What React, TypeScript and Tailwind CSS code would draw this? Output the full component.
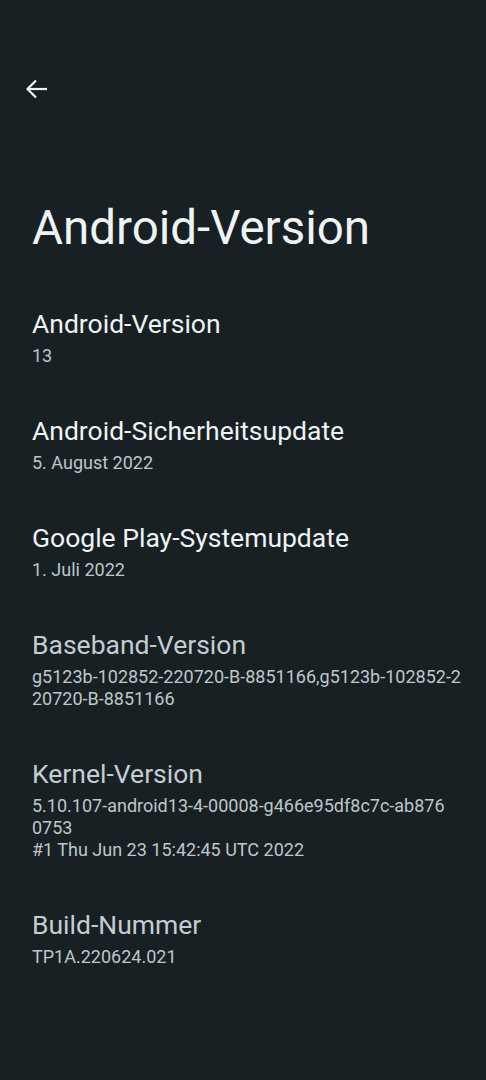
import React from 'react';

const items = [
  { title: 'Android-Version', lines: ['13'], dim: false },
  { title: 'Android-Sicherheitsupdate', lines: ['5. August 2022'], dim: false },
  { title: 'Google Play-Systemupdate', lines: ['1. Juli 2022'], dim: false },
  {
    title: 'Baseband-Version',
    lines: ['g5123b-102852-220720-B-8851166,g5123b-102852-2', '20720-B-8851166'],
    dim: true,
  },
  {
    title: 'Kernel-Version',
    lines: ['5.10.107-android13-4-00008-g466e95df8c7c-ab876', '0753', '#1 Thu Jun 23 15:42:45 UTC 2022'],
    dim: true,
  },
  { title: 'Build-Nummer', lines: ['TP1A.220624.021'], dim: true },
];

export default function App() {
  return (
    <div className="w-[486px] h-[1080px] bg-[#182023] font-['Roboto',sans-serif] overflow-hidden">
      <div className="h-[200px] pt-[79px] pl-[26px]">
        <svg width="21" height="20" viewBox="0 0 21 20" fill="none" stroke="#eef2f4" strokeWidth="2.2" overflow="visible">
          <path d="M21 10H2" />
          <path d="M10 1.5L1.5 10 10 18.5" />
        </svg>
      </div>
      <h1 className="px-8 text-[47.5px] leading-[56px] text-[#eef3f6]">Android-Version</h1>
      <div className="mt-[28px]">
        {items.map((it) => (
          <div key={it.title} className="pl-8 py-6">
            <div className={`text-[26.5px] leading-[32px] ${it.dim ? 'text-[#c3cdd2]' : 'text-[#eef3f6]'}`}>
              {it.title}
            </div>
            <div className="mt-[5px] text-[18px] leading-[22px] text-[#bdc7cb] whitespace-nowrap">
              {it.lines.map((l) => (
                <div key={l}>{l}</div>
              ))}
            </div>
          </div>
        ))}
      </div>
    </div>
  );
}
